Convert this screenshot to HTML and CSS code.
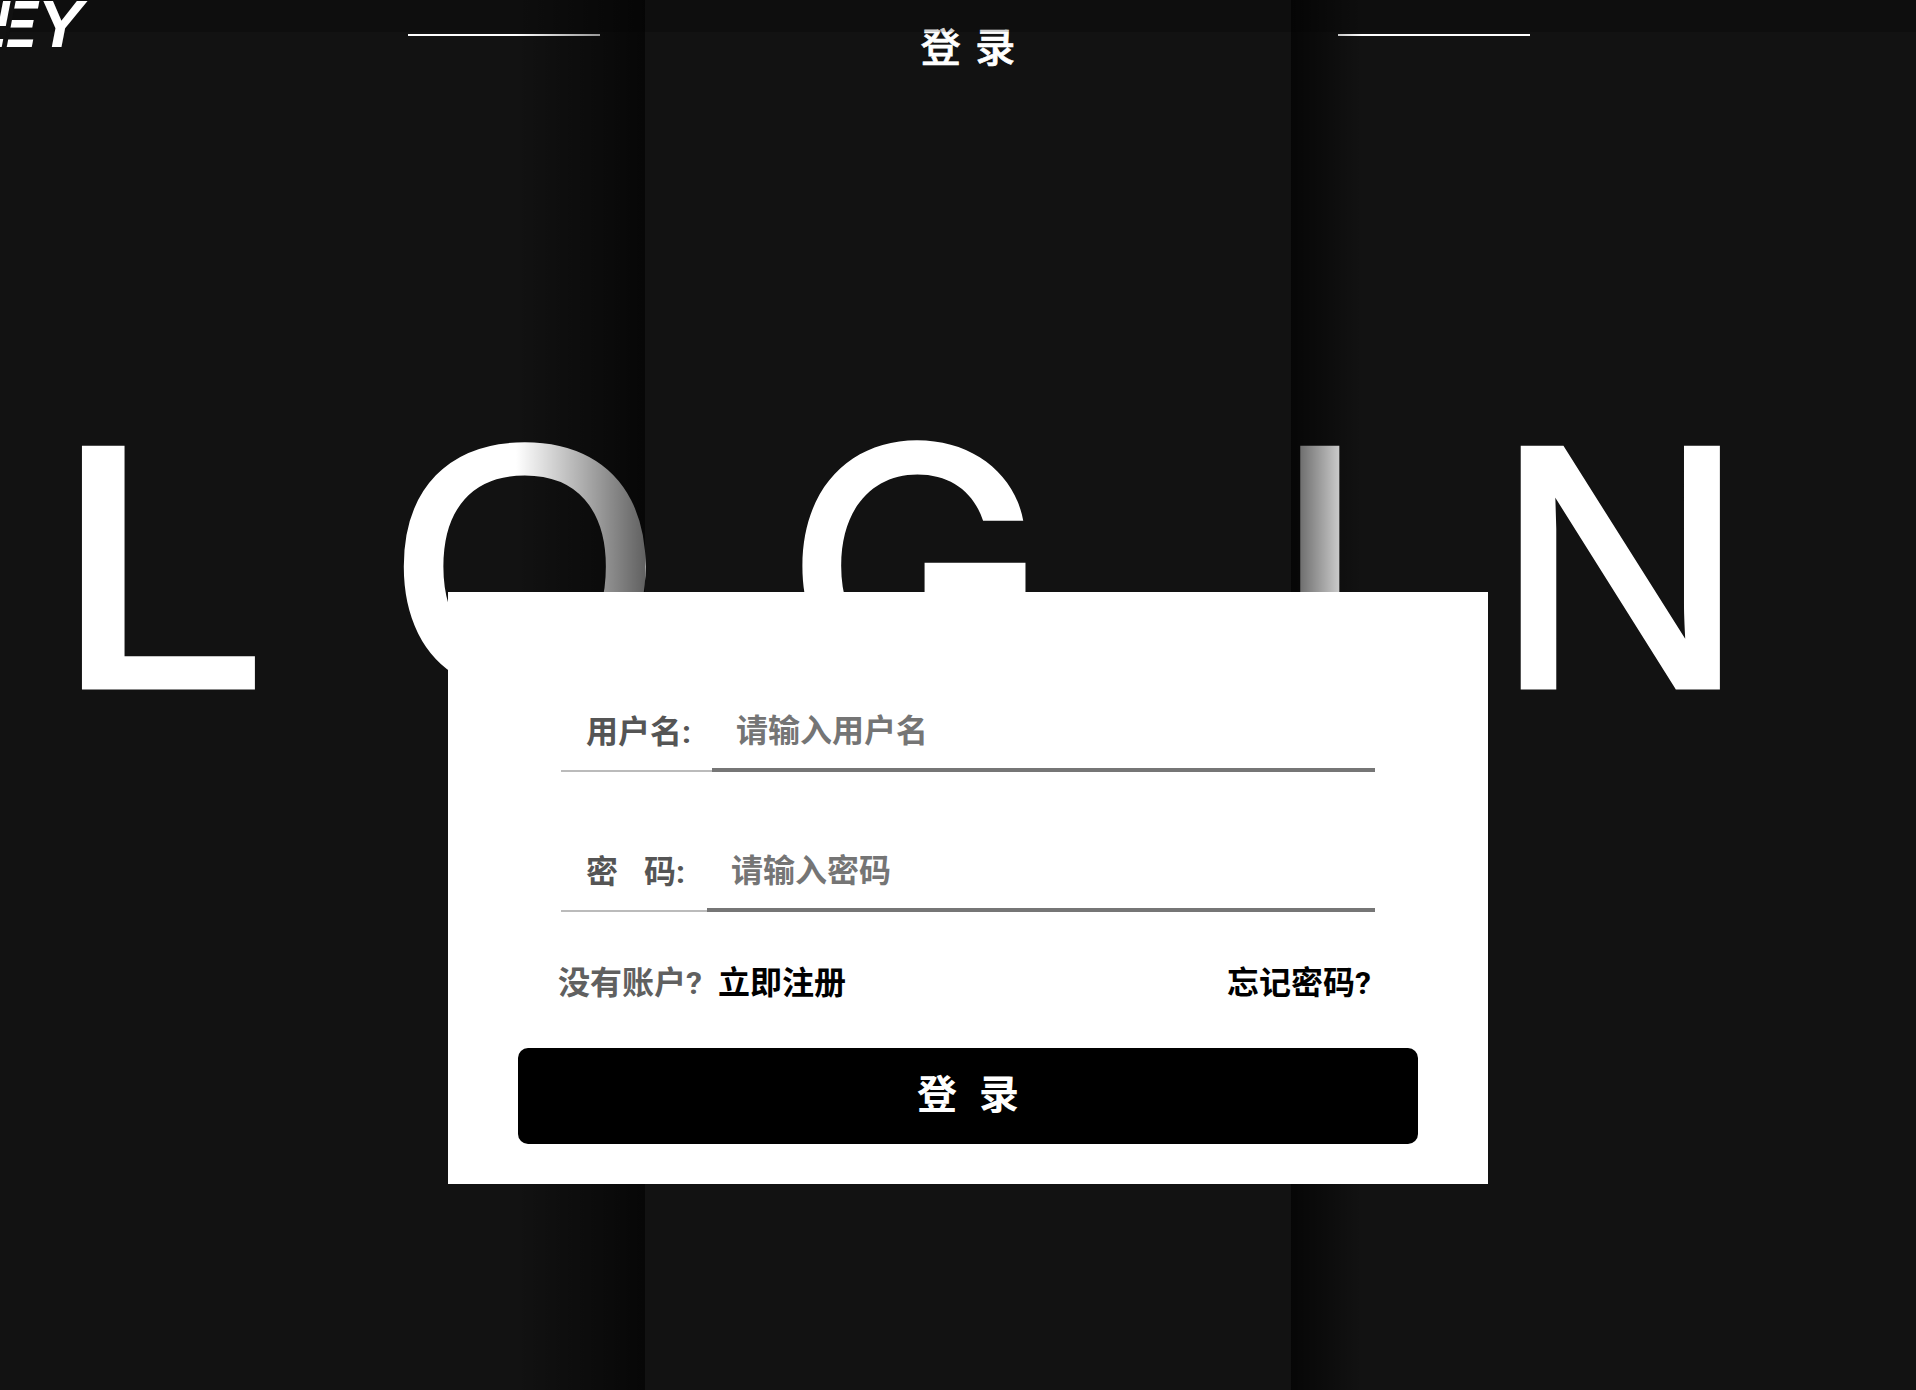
FILE: index.html
```html
<!DOCTYPE html>
<html lang="zh-CN">
<head>
    <meta charset="utf-8">
    <title>登录</title>
    <link rel="stylesheet" href="styles.css">
</head>
<body>
    <div class="page">
        <div class="top-band"></div>

        <header class="header">
            <div class="logo"><span class="logo-text">EY</span><span class="logo-cut"></span></div>
            <div class="header-line"></div>
            <div class="header-title">登 录</div>
            <div class="header-line"></div>
        </header>

        <div class="big-title">
            <span class="letter-l">L</span>
            <span>O</span>
            <span class="letter-g">G</span>
            <span>I</span>
            <span>N</span>
        </div>

        <!-- columns shade the title and header lines, the card stays on top -->
        <div class="shades">
            <div class="shade shade-left"></div>
            <div class="shade"></div>
            <div class="shade shade-right"></div>
        </div>

        <form class="card">
            <div class="field">
                <label class="field-label" for="username">用户名:</label>
                <input class="field-input" type="text" id="username" placeholder="请输入用户名">
            </div>
            <div class="field">
                <label class="field-label field-label-wide" for="password">密<i class="gap"></i>码:</label>
                <input class="field-input" type="password" id="password" placeholder="请输入密码">
            </div>
            <div class="links">
                <div><span class="muted">没有账户?</span><a class="link link-register">立即注册</a></div>
                <a class="link">忘记密码?</a>
            </div>
            <button class="submit" type="button">登 录</button>
        </form>
    </div>
</body>
</html>
```
FILE: styles.css
```css
html, body {
    margin: 0;
    height: 100%;
    overflow: hidden;
    background-color: #121212;
}

.page {
    position: relative;
    width: 1936px;
    height: 1390px;
    overflow: hidden;
    font-family: "Inter", "Noto Sans CJK SC", sans-serif;
}

.top-band {
    position: absolute;
    top: 0;
    left: 0;
    right: 0;
    height: 32px;
    background-color: rgba(0, 0, 0, 0.18);
}

.header {
    display: grid;
    grid-template-columns: 408px 192px 1fr 192px 406px;
    height: 112px;
    color: #fff;
}

.logo {
    position: relative;
    overflow: hidden;
    height: 50px;
}

.logo-text {
    display: block;
    margin-left: -7px;
    margin-top: -10px;
    font-family: "Liberation Sans", sans-serif;
    font-size: 67px;
    line-height: 68px;
    font-weight: bold;
    font-style: italic;
}

.logo-cut {
    position: absolute;
    left: 6px;
    top: 0;
    width: 5px;
    height: 50px;
    background-color: #111;
    transform: skewX(-11deg);
}

.logo-cut::after {
    content: "";
    position: absolute;
    top: 26px;
    left: -8px;
    width: 10px;
    height: 13px;
    background-color: #121212;
}

.header-line {
    height: 2px;
    margin-top: 34px;
    background-color: #fff;
}

.header-title {
    padding-top: 24px;
    font-size: 40px;
    font-weight: 500;
    -webkit-text-stroke: 0.7px #fff;
    line-height: 48px;
    letter-spacing: 2px;
    text-align: center;
}

.big-title {
    display: grid;
    grid-template-columns: 336px 392px 489px 224px auto;
    margin-top: 308px;
    padding-left: 55px;
    height: 172px;
    color: #fff;
    font-family: "Liberation Sans", sans-serif;
    font-size: 344px;
    -webkit-text-stroke: 7px #fff;
    line-height: 294px;
    text-rendering: geometricPrecision;
}

.letter-l {
    transform: scaleX(1.09);
    transform-origin: left;
}

.letter-g {
    font-family: "Inter", sans-serif;
    font-size: 336px;
    font-weight: 500;
    -webkit-text-stroke: 0;
    transform: scaleX(1.046);
    transform-origin: left;
}

.shades {
    position: absolute;
    top: 0;
    left: 0;
    right: 0;
    bottom: 0;
    display: grid;
    grid-template-columns: 1fr 1fr 1fr;
}

.shade-left {
    background: linear-gradient(to right, rgba(0, 0, 0, 0) 80%, rgba(0, 0, 0, 0.62));
}

.shade-right {
    background: linear-gradient(to right, rgba(0, 0, 0, 0.65), rgba(0, 0, 0, 0) 11%);
}

.card {
    position: relative;
    box-sizing: border-box;
    width: 1040px;
    height: 592px;
    margin: 0 auto;
    padding: 100px 58px 0;
    background-color: #fff;
    font-family: "Roboto", "Noto Sans CJK SC", sans-serif;
}

.field {
    display: flex;
    width: 814px;
    height: 80px;
    margin: 0 0 60px 55px;
    font-size: 32px;
    font-weight: bold;
}

.field-label {
    box-sizing: border-box;
    width: 151px;
    height: 80px;
    padding: 18px 0 0 25px;
    border-bottom: 2px solid #bbb;
    color: #555;
    line-height: 44px;
    white-space: nowrap;
}

.field-label-wide {
    width: 146px;
}

.gap {
    display: inline-block;
    width: 26px;
}

.field-input {
    flex: 1;
    box-sizing: border-box;
    min-width: 0;
    height: 80px;
    padding: 1px 0 0 24px;
    border: 0;
    border-bottom: 4px solid #767676;
    outline: none;
    font: inherit;
}

.field-input::placeholder {
    color: #757575;
}

.links {
    display: flex;
    justify-content: space-between;
    width: 813px;
    margin: -11px 0 0 52px;
    font-size: 32px;
    font-weight: bold;
    line-height: 44px;
}

.muted {
    color: #606060;
}

.link {
    color: #000;
}

.link-register {
    margin-left: 16px;
}

.submit {
    display: block;
    width: 900px;
    height: 96px;
    margin: 43px 0 0 12px;
    padding: 0 0 8px;
    border: 0;
    border-radius: 10px;
    background-color: #000;
    color: #fff;
    font: inherit;
    font-size: 40px;
    font-weight: bold;
    word-spacing: 12px;
}
```
